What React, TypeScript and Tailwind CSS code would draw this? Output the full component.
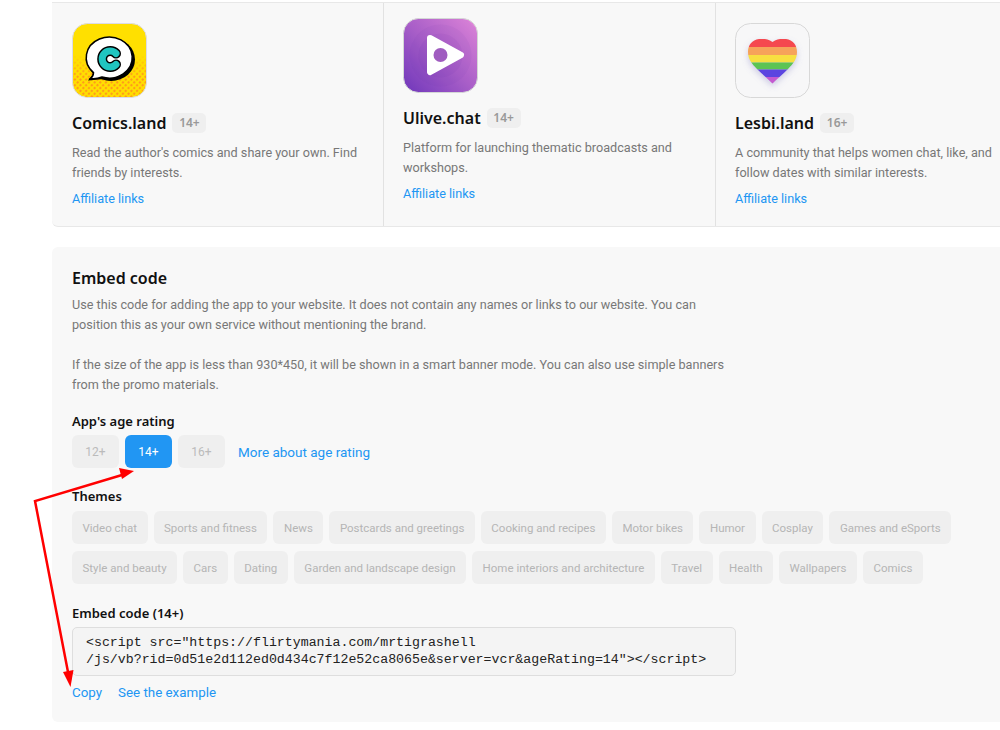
function ComicsIcon() {
  return (
    <svg width="75" height="75" viewBox="0 0 75 75" className="block">
      <defs>
        <pattern id="dots" width="4" height="4" patternUnits="userSpaceOnUse" patternTransform="rotate(45)">
          <circle cx="2" cy="2" r="1.2" fill="#ff9a1a" />
        </pattern>
        <linearGradient id="fade" x1="0" y1="0" x2="0" y2="1">
          <stop offset="0.42" stopColor="#000" />
          <stop offset="0.72" stopColor="#fff" />
        </linearGradient>
        <mask id="dotmask">
          <rect width="75" height="75" fill="url(#fade)" />
        </mask>
      </defs>
      <rect x="0.5" y="0.5" width="74" height="74" rx="15" fill="#ffe000" stroke="#dcdce6" />
      <rect x="1" y="1" width="73" height="73" rx="15" fill="url(#dots)" mask="url(#dotmask)" />
      <ellipse cx="39" cy="36.500" rx="24" ry="21.500" fill="#000" />
      <path d="M16 57.500 L24 47 L32 56 Z" fill="#000" />
      <path d="M18.500 55.500 C20.500 54 21.500 52 21.500 49.500 A23 20.500 0 1 1 30 54 C26 55.500 22 56 18.500 55.500 Z" fill="#fff" stroke="#000" strokeWidth="1.500" />
      <path d="M44 30.500 A8 8 0 1 0 44 41.500" fill="none" stroke="#000" strokeWidth="10" strokeLinecap="round" />
      <path d="M44 30.500 A8 8 0 1 0 44 41.500" fill="none" stroke="#20c5c0" strokeWidth="7" strokeLinecap="round" />
    </svg>
  )
}

function UliveIcon() {
  return (
    <svg width="75" height="75" viewBox="0 0 75 75" className="block">
      <defs>
        <linearGradient id="ulive" x1="0" y1="1" x2="1" y2="0">
          <stop offset="0" stopColor="#7038bb" />
          <stop offset="0.5" stopColor="#ad62ca" />
          <stop offset="1" stopColor="#e48ada" />
        </linearGradient>
        <clipPath id="uliveClip">
          <rect x="0.500" y="0.500" width="74" height="74" rx="15" />
        </clipPath>
      </defs>
      <rect x="0.500" y="0.500" width="74" height="74" rx="15" fill="url(#ulive)" stroke="#d8dcd8" />
      <g clipPath="url(#uliveClip)" fill="#6a2fa8">
        <circle cx="37.500" cy="37.500" r="44" fillOpacity="0.05" />
        <circle cx="37.500" cy="37.500" r="31" fillOpacity="0.06" />
        <circle cx="37.500" cy="37.500" r="22" fillOpacity="0.07" />
      </g>
      <path d="M27 20 L58 37 L27 54 Z" fill="#fff" stroke="#fff" strokeWidth="6" strokeLinejoin="round" />
      <circle cx="37.500" cy="37" r="7" fill="#a05cc0" />
    </svg>
  )
}

function LesbiIcon() {
  const stripes = [
    ['#f5484f', 16, 8],
    ['#f6a35a', 24, 8],
    ['#f7e041', 32, 7.500],
    ['#5cc454', 39.500, 7],
    ['#5b45e0', 46.500, 7.500],
    ['#c45ad0', 54, 8],
  ] as const
  const heart = 'M37.500 19 C33 15.500 28 15.500 24 16 C17 17 13 22 13 29 C13 36 17 41 22 46 C27 51 33 56 37.500 60.500 C42 56 48 51 53 46 C58 41 62 36 62 29 C62 22 58 17 51 16 C47 15.500 42 15.500 37.500 19 Z'
  return (
    <svg width="75" height="75" viewBox="0 0 75 75" className="block">
      <defs>
        <clipPath id="heartClip">
          <path d={heart} />
        </clipPath>
        <filter id="heartBlur" x="-30%" y="-30%" width="160%" height="160%">
          <feGaussianBlur stdDeviation="3" />
        </filter>
      </defs>
      <rect x="0.500" y="0.500" width="74" height="74" rx="15" fill="#f7f7f8" stroke="#d8d8d8" />
      <path d={heart} fill="#7a78c0" fillOpacity="0.35" filter="url(#heartBlur)" transform="translate(0 3)" />
      <g clipPath="url(#heartClip)">
        {stripes.map(([color, y, h]) => (
          <rect key={color} x="10" y={y} width="55" height={h} fill={color} />
        ))}
      </g>
    </svg>
  )
}

const apps = [
  { name: 'Comics.land', age: '14+', text: "Read the author's comics and share your own. Find friends by interests.", icon: <ComicsIcon />, pad: 'pt-[20px] pl-[20px] w-[332px] border-r', textWidth: 'w-[296px]' },
  { name: 'Ulive.chat', age: '14+', text: 'Platform for launching thematic broadcasts and workshops.', icon: <UliveIcon />, pad: 'pt-[15px] pl-[19px] w-[332px] border-r', textWidth: 'w-[296px]' },
  { name: 'Lesbi.land', age: '16+', text: 'A community that helps women chat, like, and follow dates with similar interests.', icon: <LesbiIcon />, pad: 'pt-[20px] pl-[19px] w-[284px]', textWidth: 'w-[262px]' },
]

const themes = [
  'Video chat', 'Sports and fitness', 'News', 'Postcards and greetings', 'Cooking and recipes', 'Motor bikes', 'Humor', 'Cosplay', 'Games and eSports',
  'Style and beauty', 'Cars', 'Dating', 'Garden and landscape design', 'Home interiors and architecture', 'Travel', 'Health', 'Wallpapers', 'Comics',
]

const heading = 'font-["Noto_Sans",sans-serif] font-semibold text-[#111]'

export default function App() {
  return (
    <div className='relative h-[730px] w-[1000px] overflow-hidden bg-white pl-[52px] pt-[2px] font-["Roboto",sans-serif] text-[12.65px] leading-[20px]'>
      <div className="flex h-[225px] rounded-bl-[6px] border-y border-[#e8e8e8] bg-[#f8f8f8]">
        {apps.map((app) => (
          <div key={app.name} className={`${app.pad} shrink-0 border-[#e2e2e2]`}>
            {app.icon}
            <div className="mt-[15px] flex items-center">
              <span className={`${heading} text-[16px] leading-[20px]`}>{app.name}</span>
              <span className="ml-[6px] flex h-[20px] w-[34px] items-center justify-center rounded-[5px] bg-[#efefef] font-['Noto_Sans',sans-serif] text-[12px] font-semibold text-[#999]">{app.age}</span>
            </div>
            <p className={`${app.textWidth} mt-[10px] text-[#777]`}>{app.text}</p>
            <a className="mt-[6px] block text-[#2196f3]">Affiliate links</a>
          </div>
        ))}
      </div>

      <div className="mt-[20px] h-[475px] rounded-l-[6px] bg-[#f8f8f8] pl-[20px] pt-[21px]">
        <h2 className={`${heading} text-[16px] leading-[20px]`}>Embed code</h2>
        <p className="mt-[7px] w-[655px] text-[#777]">
          Use this code for adding the app to your website. It does not contain any names or links to our website. You can position this as your own service without mentioning the brand.
        </p>
        <p className="mt-[20px] w-[655px] text-[#777]">
          If the size of the app is less than 930*450, it will be shown in a smart banner mode. You can also use simple banners from the promo materials.
        </p>

        <h3 className={`${heading} mt-[16px] text-[13px]`}>App's age rating</h3>
        <div className="mt-[4px] flex items-center gap-[6px]">
          <span className="flex h-[33px] w-[47px] items-center justify-center rounded-[6px] bg-[#efefef] text-[12px] text-[#bbb]">12+</span>
          <span className="flex h-[33px] w-[47px] items-center justify-center rounded-[6px] bg-[#2196f3] text-[12px] text-white">14+</span>
          <span className="flex h-[33px] w-[47px] items-center justify-center rounded-[6px] bg-[#efefef] text-[12px] text-[#bbb]">16+</span>
          <a className="ml-[7px] text-[13.5px] text-[#2196f3]">More about age rating</a>
        </div>

        <h3 className={`${heading} mt-[18px] text-[13px]`}>Themes</h3>
        <div className="mt-[5px] flex w-[900px] flex-wrap gap-x-[6px] gap-y-[7px]">
          {themes.map((theme) => (
            <span key={theme} className="flex h-[33px] items-center rounded-[6px] bg-[#efefef] px-[10.5px] text-[11.5px] text-[#b5b5b5]">{theme}</span>
          ))}
        </div>

        <h3 className={`${heading} mt-[19px] text-[13px]`}>Embed code (14+)</h3>
        <div className="mt-[4px] h-[49px] w-[664px] rounded-[5px] border border-[#dedede] bg-[#f4f4f4] px-[13px] py-[6px] font-['Liberation_Mono',monospace] text-[13.25px] leading-[17px] text-[#222]">
          {'<script src="https://flirtymania.com/mrtigrashell'}
          <br />
          {'/js/vb?rid=0d51e2d112ed0d434c7f12e52ca8065e&server=vcr&ageRating=14"></script>'}
        </div>
        <div className="mt-[7px] flex gap-[16px] text-[13.35px] text-[#2196f3]">
          <a>Copy</a>
          <a>See the example</a>
        </div>
      </div>

      <svg width="1000" height="730" className="pointer-events-none absolute left-0 top-0">
        <path d="M122 475 L35 501 L68 672" fill="none" stroke="#f00" strokeWidth="2.500" />
        <path d="M134 471 L119 468 L122 479 Z" fill="#f00" />
        <path d="M70.500 687 L63 672 L73.500 670 Z" fill="#f00" />
      </svg>
    </div>
  )
}
